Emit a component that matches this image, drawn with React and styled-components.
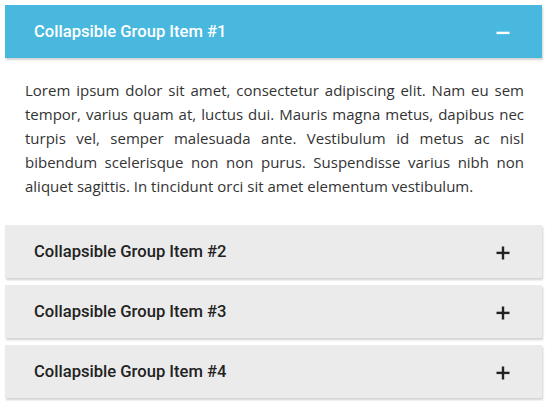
import React, { useState } from "react";
import styled, { createGlobalStyle } from "styled-components";

const GlobalStyle = createGlobalStyle`
  html, body {
    margin: 0;
    padding: 0;
    background: #ffffff;
  }
`;

const items = [
  {
    id: 1,
    title: "Collapsible Group Item #1",
    text: "Lorem ipsum dolor sit amet, consectetur adipiscing elit. Nam eu sem tempor, varius quam at, luctus dui. Mauris magna metus, dapibus nec turpis vel, semper malesuada ante. Vestibulum id metus ac nisl bibendum scelerisque non non purus. Suspendisse varius nibh non aliquet sagittis. In tincidunt orci sit amet elementum vestibulum.",
  },
  { id: 2, title: "Collapsible Group Item #2", text: "" },
  { id: 3, title: "Collapsible Group Item #3", text: "" },
  { id: 4, title: "Collapsible Group Item #4", text: "" },
];

export default function App() {
  const [open, setOpen] = useState(1);
  return (
    <>
      <GlobalStyle />
      <Accordion>
        {items.map((item) => {
          const isOpen = open === item.id;
          return (
            <Panel key={item.id}>
              <Heading
                $active={isOpen}
                onClick={() => setOpen(isOpen ? null : item.id)}
              >
                <Title>{item.title}</Title>
                <Toggle $active={isOpen}>
                  <svg width="14" height="14" viewBox="0 0 14 14">
                    <rect x="0.5" y="5.7" width="13" height="2.4" fill="currentColor" />
                    {!isOpen && (
                      <rect x="5.8" y="0.5" width="2.4" height="13" fill="currentColor" />
                    )}
                  </svg>
                </Toggle>
              </Heading>
              {isOpen && <Body>{item.text}</Body>}
            </Panel>
          );
        })}
      </Accordion>
    </>
  );
}

const Accordion = styled.div`
  width: 537px;
  padding: 5px;
  display: flex;
  flex-direction: column;
  gap: 7px;
`;

const Panel = styled.div`
  display: flex;
  flex-direction: column;
`;

const Heading = styled.div`
  display: flex;
  align-items: center;
  justify-content: space-between;
  height: 53px;
  padding: 0 32px 0 29px;
  box-sizing: border-box;
  background: ${(p) => (p.$active ? "#48b8de" : "#ebebeb")};
  color: ${(p) => (p.$active ? "#ffffff" : "#222222")};
  box-shadow: 1px 2px 2px rgba(0, 0, 0, 0.18);
  cursor: pointer;
`;

const Title = styled.h4`
  margin: 0;
  font-family: Roboto, "Liberation Sans", sans-serif;
  font-weight: 500;
  font-size: 16.6px;
`;

const Toggle = styled.span`
  display: flex;
  color: ${(p) => (p.$active ? "#ffffff" : "#222222")};
  margin-top: 2px;
`;

const Body = styled.p`
  margin: 0;
  padding: 20px 18px 20px 20px;
  font-family: "Open Sans", "Noto Sans", sans-serif;
  font-size: 15px;
  line-height: 24px;
  color: #333333;
  text-align: justify;
`;
